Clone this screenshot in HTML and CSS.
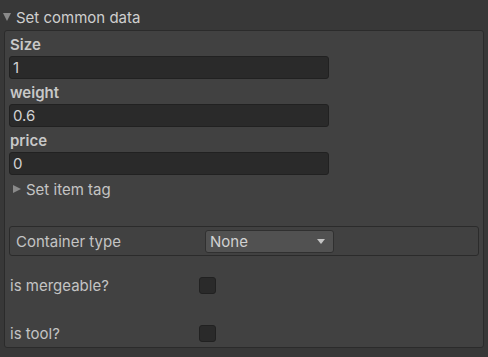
FILE: index.html
```html
<!DOCTYPE html>
<html lang="en">
<head>
    <meta charset="UTF-8">
    <title>Item inspector</title>
    <link rel="stylesheet" href="styles.css">
</head>
<body>
    <div class="foldout">
        <span class="arrow down"></span>Set common data
    </div>
    <div class="panel">
        <div class="field">
            <div class="label">Size</div>
            <div class="input">1</div>
        </div>
        <div class="field">
            <div class="label">weight</div>
            <div class="input">0.6</div>
        </div>
        <div class="field">
            <div class="label">price</div>
            <div class="input">0</div>
        </div>
        <div class="sub_foldout">
            <span class="arrow right"></span>Set item tag
        </div>
        <div class="box">
            <span class="box_label">Container type</span>
            <div class="dropdown">
                <span>None</span>
                <span class="drop_arrow"></span>
            </div>
        </div>
        <div class="toggle_row first">
            <span class="toggle_label">is mergeable?</span>
            <span class="check"></span>
        </div>
        <div class="toggle_row">
            <span class="toggle_label">is tool?</span>
            <span class="check"></span>
        </div>
    </div>
</body>
</html>
```
FILE: styles.css
```css
*{
    margin:0;
    padding:0;
    box-sizing:border-box;
}
body{
    width:488px;
    height:357px;
    background-color:#383838;
    color:#c4c4c4;
    font-family:Inter,"Noto Sans",sans-serif;
    font-size:15px;
    overflow:hidden;
}
.foldout{
    height:30px;
    padding-left:3px;
    padding-top:4px;
    display:flex;
    align-items:center;
    color:#cfcfcf;
}
.arrow{
    display:inline-block;
    width:0;
    height:0;
    border-style:solid;
}
.arrow.down{
    border-width:8px 4.5px 0 4.5px;
    border-color:#8a8a8a transparent transparent transparent;
    margin-right:5px;
}
.arrow.right{
    border-width:4.5px 0 4.5px 8px;
    border-color:transparent transparent transparent #8a8a8a;
    margin-right:5px;
}
.panel{
    margin:0 4px;
    width:480px;
    height:318px;
    background-color:#414141;
    border:1px solid #2b2b2b;
    border-radius:3px;
    padding:0 4px;
}
.label{
    height:25px;
    padding-top:3px;
    line-height:22px;
    padding-left:1px;
    font-weight:600;
    color:#c8c8c8;
}
.input{
    width:320px;
    height:23px;
    line-height:21px;
    background-color:#2a2a2a;
    border:1px solid #212121;
    border-radius:3px;
    padding-left:3px;
    color:#d2d2d2;
}
.sub_foldout{
    margin-top:2px;
    height:24px;
    display:flex;
    align-items:center;
    padding-left:4px;
    color:#c4c4c4;
}
.box{
    margin-top:25px;
    height:30px;
    border:1px solid #2b2b2b;
    border-radius:3px;
    display:flex;
    align-items:center;
    padding-left:6px;
}
.box_label{
    width:189px;
}
.dropdown{
    width:129px;
    height:23px;
    background-color:#515151;
    border:1px solid #303030;
    border-radius:3px;
    display:flex;
    align-items:center;
    justify-content:space-between;
    padding:0 8px 0 4px;
    color:#d2d2d2;
}
.drop_arrow{
    width:0;
    height:0;
    border-style:solid;
    border-width:5px 4.5px 0 4.5px;
    border-color:#c4c4c4 transparent transparent transparent;
}
.toggle_row{
    margin-top:24px;
    height:24px;
    display:flex;
    align-items:center;
    padding-left:1px;
}
.toggle_row.first{
    margin-top:17px;
}
.toggle_label{
    width:189px;
}
.check{
    width:17px;
    height:17px;
    background-color:#2a2a2a;
    border:1px solid #212121;
    border-radius:3px;
}
```
